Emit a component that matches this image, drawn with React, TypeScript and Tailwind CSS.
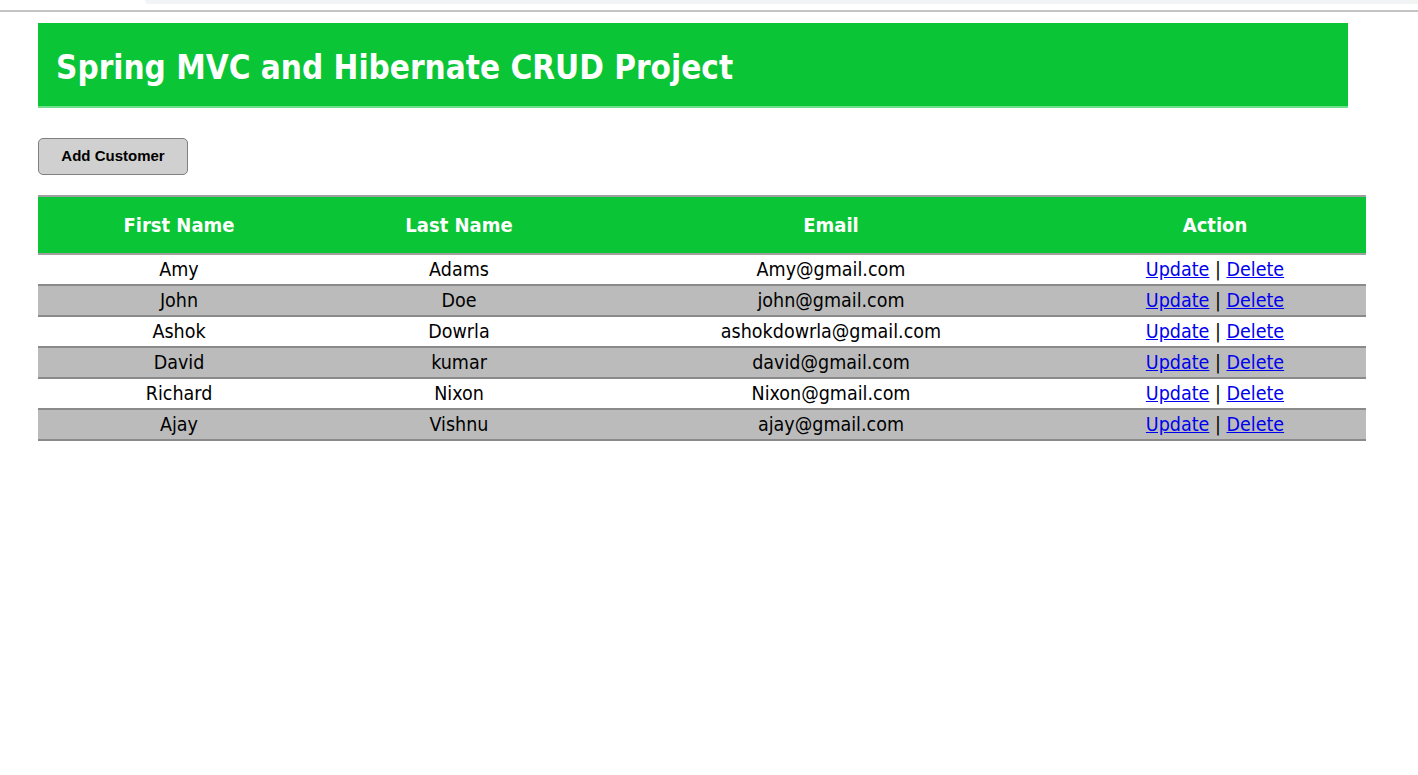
const customers = [
  { first: 'Amy', last: 'Adams', email: 'Amy@gmail.com' },
  { first: 'John', last: 'Doe', email: 'john@gmail.com' },
  { first: 'Ashok', last: 'Dowrla', email: 'ashokdowrla@gmail.com' },
  { first: 'David', last: 'kumar', email: 'david@gmail.com' },
  { first: 'Richard', last: 'Nixon', email: 'Nixon@gmail.com' },
  { first: 'Ajay', last: 'Vishnu', email: 'ajay@gmail.com' },
];

export default function App() {
  return (
    <div className="min-h-[775px] bg-white font-['DejaVu_Sans_Condensed','DejaVu_Sans',sans-serif] text-black">
      {/* browser strip */}
      <div className="h-[12px] border-b-2 border-[#c4c4c4] flex">
        <div className="ml-[145px] flex-1 h-[4px] bg-[#f1f3f4] rounded-bl-[6px]" />
      </div>

      <div className="pl-[38px] pr-[52px] pt-[11px]">
        {/* Header */}
        <div className="w-[1310px] h-[85px] bg-[#0ac535] flex items-center px-[18px] border-b-2 border-[#6ee08a]">
          <h1 className="text-white font-bold text-[33px] leading-none pt-[6px]">
            Spring MVC and Hibernate CRUD Project
          </h1>
        </div>

        {/* Add button */}
        <button className="mt-[30px] w-[150px] h-[37px] bg-[#d0d0d0] border border-[#808080] rounded-[5px] font-['Liberation_Sans',Arial,sans-serif] font-bold text-[15px] text-black">
          Add Customer
        </button>

        {/* Table */}
        <table className="mt-[20px] w-[1328px] border-collapse table-fixed">
          <colgroup>
            <col className="w-[282px]" />
            <col className="w-[278px]" />
            <col className="w-[466px]" />
            <col className="w-[302px]" />
          </colgroup>
          <thead>
            <tr className="bg-[#0ac535] text-white border-t-2 border-b-2 border-[#a0a0a0] h-[58px]">
              <th className="font-bold text-[20px]">First Name</th>
              <th className="font-bold text-[20px]">Last Name</th>
              <th className="font-bold text-[20px]">Email</th>
              <th className="font-bold text-[20px]">Action</th>
            </tr>
          </thead>
          <tbody>
            {customers.map((c, i) => (
              <tr
                key={c.email}
                className={`h-[31px] border-b-2 border-[#8a8a8a] text-[19.5px] text-center leading-none ${
                  i % 2 === 1 ? 'bg-[#bbbbbb]' : 'bg-white'
                }`}
              >
                <td>{c.first}</td>
                <td>{c.last}</td>
                <td>{c.email}</td>
                <td>
                  <a href="#" className="text-[#0000ee] underline">Update</a>
                  {' | '}
                  <a href="#" className="text-[#0000ee] underline">Delete</a>
                </td>
              </tr>
            ))}
          </tbody>
        </table>
      </div>
    </div>
  );
}
